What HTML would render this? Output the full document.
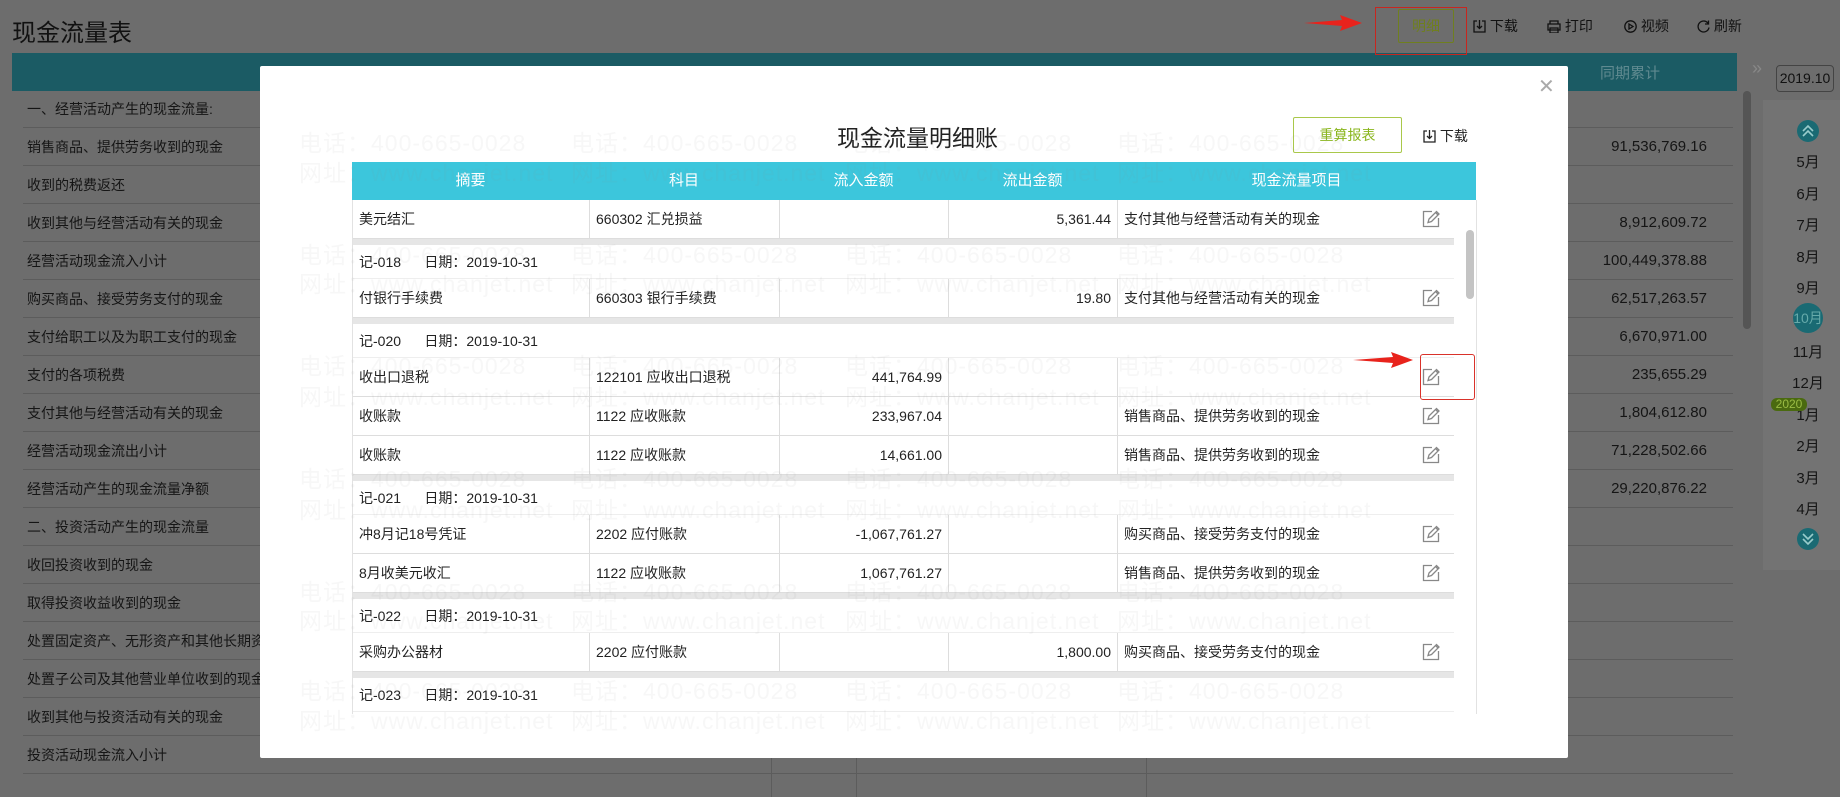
<!DOCTYPE html>
<html><head><meta charset="utf-8">
<style>
*{margin:0;padding:0;box-sizing:border-box}
body{width:1840px;height:797px;overflow:hidden;position:relative;background:#6d6d6d;font-family:"Liberation Sans","Noto Sans CJK SC",sans-serif;color:#111;font-size:14px}
.a{position:absolute;white-space:nowrap}
.prow{position:absolute;left:23px;width:1710px;height:38px;border-bottom:1px solid #5c5c5c;line-height:38px;padding-left:4px;color:#151515}
.pval{position:absolute;right:26px;font-size:15px}
.m{position:absolute;left:1780px;width:56px;text-align:center;font-size:15px;color:#151515}
.modal{position:absolute;left:260px;top:66px;width:1308px;height:692px;background:#fff;border-radius:2px}
.hd{position:absolute;left:92px;top:96px;width:1124px;height:38px;background:#3cc6dc;color:#fff;font-size:15px;display:flex}
.hd div{text-align:center;line-height:38px}
.body{position:absolute;left:92px;top:134px;width:1125px;height:514px;border-left:1px solid #e2e2e2;border-right:1px solid #e2e2e2;overflow:hidden}
.r{display:flex;height:39px;border-bottom:1px solid #ddd;width:1101px;font-size:14px;color:#222}
.r div{line-height:38px;padding:0 6px;border-right:1px solid #ddd;overflow:hidden}
.r div:last-child{border-right:none;position:relative}
.g{height:34px;line-height:34px;padding-left:6px;width:1101px;font-size:14px;color:#222;border-bottom:1px solid #eee}
.band{height:6px;background:#e6e6e6;width:1101px}
.c1{width:237px}.c2{width:190px}.c3{width:169px;text-align:right}.c4{width:169px;text-align:right}.c5{width:336px}
.ed{position:absolute;right:14px;top:10px}
.wm{position:absolute;font-size:23px;color:rgba(140,140,140,0.07);white-space:nowrap;letter-spacing:1px}
</style></head><body>

<div class="a" style="left:12px;top:13px;font-size:24px;color:#111">现金流量表</div>
<div class="a" style="left:12px;top:53px;width:1725px;height:38px;background:#1b5b64"></div>
<div class="a" style="left:1600px;top:62px;font-size:15px;color:#5f8a90">同期累计</div>
<div class="a" style="left:1752px;top:58px;font-size:18px;color:#888">»</div>
<div class="a" style="left:1743px;top:91px;width:8px;height:238px;background:#555;border-radius:4px"></div>

<div class="prow" style="top:90px">一、经营活动产生的现金流量:</div>
<div class="prow" style="top:128px">销售商品、提供劳务收到的现金<span class="pval">91,536,769.16</span></div>
<div class="prow" style="top:166px">收到的税费返还</div>
<div class="prow" style="top:204px">收到其他与经营活动有关的现金<span class="pval">8,912,609.72</span></div>
<div class="prow" style="top:242px">经营活动现金流入小计<span class="pval">100,449,378.88</span></div>
<div class="prow" style="top:280px">购买商品、接受劳务支付的现金<span class="pval">62,517,263.57</span></div>
<div class="prow" style="top:318px">支付给职工以及为职工支付的现金<span class="pval">6,670,971.00</span></div>
<div class="prow" style="top:356px">支付的各项税费<span class="pval">235,655.29</span></div>
<div class="prow" style="top:394px">支付其他与经营活动有关的现金<span class="pval">1,804,612.80</span></div>
<div class="prow" style="top:432px">经营活动现金流出小计<span class="pval">71,228,502.66</span></div>
<div class="prow" style="top:470px">经营活动产生的现金流量净额<span class="pval">29,220,876.22</span></div>
<div class="prow" style="top:508px">二、投资活动产生的现金流量</div>
<div class="prow" style="top:546px">收回投资收到的现金</div>
<div class="prow" style="top:584px">取得投资收益收到的现金</div>
<div class="prow" style="top:622px">处置固定资产、无形资产和其他长期资产</div>
<div class="prow" style="top:660px">处置子公司及其他营业单位收到的现金净额</div>
<div class="prow" style="top:698px">收到其他与投资活动有关的现金</div>
<div class="prow" style="top:736px">投资活动现金流入小计</div>
<div class="a" style="left:771px;top:758px;width:1px;height:39px;background:#5c5c5c"></div>
<div class="a" style="left:856px;top:758px;width:1px;height:39px;background:#5c5c5c"></div>
<div class="a" style="left:1146px;top:758px;width:1px;height:39px;background:#5c5c5c"></div>

<svg class="a" style="left:1304px;top:15px" width="60" height="16"><polygon points="0,8 38,5 36,0 58,8 36,16 38,11" fill="#e8231c"/></svg>
<div class="a" style="left:1375px;top:7px;width:92px;height:48px;border:1px solid #c8261f"></div>
<div class="a" style="left:1398px;top:9px;width:56px;height:34px;border:1px solid #6f7f1f;border-radius:2px;color:#6f7f1f;text-align:center;line-height:32px;font-size:14px">明细</div>
<div class="a" style="left:1473px;top:16px;font-size:14px">
<svg width="13" height="13" style="vertical-align:-2px" fill="none" stroke="#111" stroke-width="1.3"><path d="M4 1H1v11h11V1H9M6.5 0v8M4 6l2.5 2.5L9 6"/></svg> 下载</div>
<div class="a" style="left:1547px;top:16px;font-size:14px">
<svg width="14" height="13" style="vertical-align:-2px" fill="none" stroke="#111" stroke-width="1.3"><path d="M3 4V1h8v3M1 4h12v6H1zM3 8h8v5H3z"/></svg> 打印</div>
<div class="a" style="left:1624px;top:16px;font-size:14px">
<svg width="13" height="13" style="vertical-align:-2px" fill="none" stroke="#111" stroke-width="1.3"><circle cx="6.5" cy="6.5" r="5.7"/><path d="M5 4v5l4-2.5z"/></svg> 视频</div>
<div class="a" style="left:1697px;top:16px;font-size:14px">
<svg width="13" height="13" style="vertical-align:-2px" fill="none" stroke="#111" stroke-width="1.3"><path d="M11.5 4A5.5 5.5 0 1 0 12 7.5M11.5 0.5V4H8"/></svg> 刷新</div>

<div class="a" style="left:1763px;top:100px;width:77px;height:470px;background:#737373"></div>
<div class="a" style="left:1776px;top:65px;width:58px;height:27px;border:1px solid #444;border-radius:4px;text-align:center;line-height:25px;font-size:14px">2019.10</div>
<svg class="a" style="left:1797px;top:120px" width="22" height="22"><circle cx="11" cy="11" r="11" fill="#1a6a73"/><path d="M6 11l5-5 5 5M6 16l5-5 5 5" stroke="#9cc" fill="none" stroke-width="1.6"/></svg>
<div class="m" style="top:151px">5月</div>
<div class="m" style="top:183px">6月</div>
<div class="m" style="top:214px">7月</div>
<div class="m" style="top:246px">8月</div>
<div class="m" style="top:277px">9月</div>
<div class="a" style="left:1793px;top:303px;width:30px;height:30px;border-radius:50%;background:#1a6a73;color:#6aa;text-align:center;line-height:30px;font-size:14px">10月</div>
<div class="m" style="top:341px">11月</div>
<div class="m" style="top:372px">12月</div>
<div class="m" style="top:404px">1月</div>
<div class="a" style="left:1771px;top:398px;width:36px;height:13px;background:#4a6a10;border-radius:6px;color:#9b4;font-size:12px;line-height:13px;text-align:center">2020</div>
<div class="m" style="top:435px">2月</div>
<div class="m" style="top:467px">3月</div>
<div class="m" style="top:498px">4月</div>
<svg class="a" style="left:1797px;top:528px" width="22" height="22"><circle cx="11" cy="11" r="11" fill="#1a6a73"/><path d="M6 6l5 5 5-5M6 11l5 5 5-5" stroke="#9cc" fill="none" stroke-width="1.6"/></svg>

<div class="modal">
<div class="a" style="left:1278px;top:8px;font-size:20px;color:#aaa">✕</div>
<div class="a" style="left:577px;top:53px;font-size:23px;color:#222">现金流量明细账</div>
<div class="a" style="left:1033px;top:51px;width:109px;height:36px;border:1px solid #a9c84a;border-radius:2px;color:#8ab61e;text-align:center;line-height:34px;font-size:14px">重算报表</div>
<div class="a" style="left:1163px;top:60px;font-size:14px;color:#222">
<svg width="13" height="13" style="vertical-align:-2px" fill="none" stroke="#222" stroke-width="1.3"><path d="M4 1H1v11h11V1H9M6.5 0v8M4 6l2.5 2.5L9 6"/></svg> 下载</div>

<div class="hd"><div style="width:237px">摘要</div><div style="width:190px">科目</div><div style="width:169px">流入金额</div><div style="width:169px">流出金额</div><div style="width:359px">现金流量项目</div></div>

<div class="body">
<div class="r"><div class="c1">美元结汇</div><div class="c2">660302 汇兑损益</div><div class="c3"></div><div class="c4">5,361.44</div><div class="c5">支付其他与经营活动有关的现金<svg class="ed" width="18" height="18"><use href="#ed"/></svg></div></div>
<div class="band"></div>
<div class="g">记-018&nbsp;&nbsp;&nbsp;&nbsp;&nbsp;&nbsp;日期：2019-10-31</div>
<div class="r"><div class="c1">付银行手续费</div><div class="c2">660303 银行手续费</div><div class="c3"></div><div class="c4">19.80</div><div class="c5">支付其他与经营活动有关的现金<svg class="ed" width="18" height="18"><use href="#ed"/></svg></div></div>
<div class="band"></div>
<div class="g">记-020&nbsp;&nbsp;&nbsp;&nbsp;&nbsp;&nbsp;日期：2019-10-31</div>
<div class="r"><div class="c1">收出口退税</div><div class="c2">122101 应收出口退税</div><div class="c3">441,764.99</div><div class="c4"></div><div class="c5"><svg class="ed" width="18" height="18"><use href="#ed"/></svg></div></div>
<div class="r"><div class="c1">收账款</div><div class="c2">1122 应收账款</div><div class="c3">233,967.04</div><div class="c4"></div><div class="c5">销售商品、提供劳务收到的现金<svg class="ed" width="18" height="18"><use href="#ed"/></svg></div></div>
<div class="r"><div class="c1">收账款</div><div class="c2">1122 应收账款</div><div class="c3">14,661.00</div><div class="c4"></div><div class="c5">销售商品、提供劳务收到的现金<svg class="ed" width="18" height="18"><use href="#ed"/></svg></div></div>
<div class="band"></div>
<div class="g">记-021&nbsp;&nbsp;&nbsp;&nbsp;&nbsp;&nbsp;日期：2019-10-31</div>
<div class="r"><div class="c1">冲8月记18号凭证</div><div class="c2">2202 应付账款</div><div class="c3">-1,067,761.27</div><div class="c4"></div><div class="c5">购买商品、接受劳务支付的现金<svg class="ed" width="18" height="18"><use href="#ed"/></svg></div></div>
<div class="r"><div class="c1">8月收美元收汇</div><div class="c2">1122 应收账款</div><div class="c3">1,067,761.27</div><div class="c4"></div><div class="c5">销售商品、提供劳务收到的现金<svg class="ed" width="18" height="18"><use href="#ed"/></svg></div></div>
<div class="band"></div>
<div class="g">记-022&nbsp;&nbsp;&nbsp;&nbsp;&nbsp;&nbsp;日期：2019-10-31</div>
<div class="r"><div class="c1">采购办公器材</div><div class="c2">2202 应付账款</div><div class="c3"></div><div class="c4">1,800.00</div><div class="c5">购买商品、接受劳务支付的现金<svg class="ed" width="18" height="18"><use href="#ed"/></svg></div></div>
<div class="band"></div>
<div class="g">记-023&nbsp;&nbsp;&nbsp;&nbsp;&nbsp;&nbsp;日期：2019-10-31</div>
</div>
<div class="a" style="left:1206px;top:164px;width:8px;height:69px;background:#c4c4c4;border-radius:4px"></div>
</div>

<svg width="0" height="0" style="position:absolute"><defs><g id="ed" fill="none" stroke="#888" stroke-width="1.3"><path d="M10 1.5H1.5v15h15V8"/><path d="M6 12.5l1-3.5 7.5-7.5 2.5 2.5L9.5 11.5z M13.5 2.5l2.5 2.5"/></g></defs></svg>

<svg class="a" style="left:1353px;top:352px" width="62" height="16"><polygon points="0,8 40,5 38,0 60,8 38,16 40,11" fill="#e8231c"/></svg>
<div class="a" style="left:1420px;top:354px;width:55px;height:46px;border:1px solid #d9322a;border-radius:3px"></div>

<div class="wm" style="left:299px;top:124px">电话：400-665-0028</div><div class="wm" style="left:571px;top:124px">电话：400-665-0028</div><div class="wm" style="left:845px;top:124px">电话：400-665-0028</div><div class="wm" style="left:1117px;top:124px">电话：400-665-0028</div>
<div class="wm" style="left:299px;top:154px">网址：www.chanjet.net</div><div class="wm" style="left:571px;top:154px">网址：www.chanjet.net</div><div class="wm" style="left:845px;top:154px">网址：www.chanjet.net</div><div class="wm" style="left:1117px;top:154px">网址：www.chanjet.net</div>
<div class="wm" style="left:299px;top:236px">电话：400-665-0028</div><div class="wm" style="left:571px;top:236px">电话：400-665-0028</div><div class="wm" style="left:845px;top:236px">电话：400-665-0028</div><div class="wm" style="left:1117px;top:236px">电话：400-665-0028</div>
<div class="wm" style="left:299px;top:265px">网址：www.chanjet.net</div><div class="wm" style="left:571px;top:265px">网址：www.chanjet.net</div><div class="wm" style="left:845px;top:265px">网址：www.chanjet.net</div><div class="wm" style="left:1117px;top:265px">网址：www.chanjet.net</div>
<div class="wm" style="left:299px;top:347px">电话：400-665-0028</div><div class="wm" style="left:571px;top:347px">电话：400-665-0028</div><div class="wm" style="left:845px;top:347px">电话：400-665-0028</div><div class="wm" style="left:1117px;top:347px">电话：400-665-0028</div>
<div class="wm" style="left:299px;top:378px">网址：www.chanjet.net</div><div class="wm" style="left:571px;top:378px">网址：www.chanjet.net</div><div class="wm" style="left:845px;top:378px">网址：www.chanjet.net</div><div class="wm" style="left:1117px;top:378px">网址：www.chanjet.net</div>
<div class="wm" style="left:299px;top:460px">电话：400-665-0028</div><div class="wm" style="left:571px;top:460px">电话：400-665-0028</div><div class="wm" style="left:845px;top:460px">电话：400-665-0028</div><div class="wm" style="left:1117px;top:460px">电话：400-665-0028</div>
<div class="wm" style="left:299px;top:491px">网址：www.chanjet.net</div><div class="wm" style="left:571px;top:491px">网址：www.chanjet.net</div><div class="wm" style="left:845px;top:491px">网址：www.chanjet.net</div><div class="wm" style="left:1117px;top:491px">网址：www.chanjet.net</div>
<div class="wm" style="left:299px;top:573px">电话：400-665-0028</div><div class="wm" style="left:571px;top:573px">电话：400-665-0028</div><div class="wm" style="left:845px;top:573px">电话：400-665-0028</div><div class="wm" style="left:1117px;top:573px">电话：400-665-0028</div>
<div class="wm" style="left:299px;top:602px">网址：www.chanjet.net</div><div class="wm" style="left:571px;top:602px">网址：www.chanjet.net</div><div class="wm" style="left:845px;top:602px">网址：www.chanjet.net</div><div class="wm" style="left:1117px;top:602px">网址：www.chanjet.net</div>
<div class="wm" style="left:299px;top:672px">电话：400-665-0028</div><div class="wm" style="left:571px;top:672px">电话：400-665-0028</div><div class="wm" style="left:845px;top:672px">电话：400-665-0028</div><div class="wm" style="left:1117px;top:672px">电话：400-665-0028</div>
<div class="wm" style="left:299px;top:702px">网址：www.chanjet.net</div><div class="wm" style="left:571px;top:702px">网址：www.chanjet.net</div><div class="wm" style="left:845px;top:702px">网址：www.chanjet.net</div><div class="wm" style="left:1117px;top:702px">网址：www.chanjet.net</div>
</body></html>
